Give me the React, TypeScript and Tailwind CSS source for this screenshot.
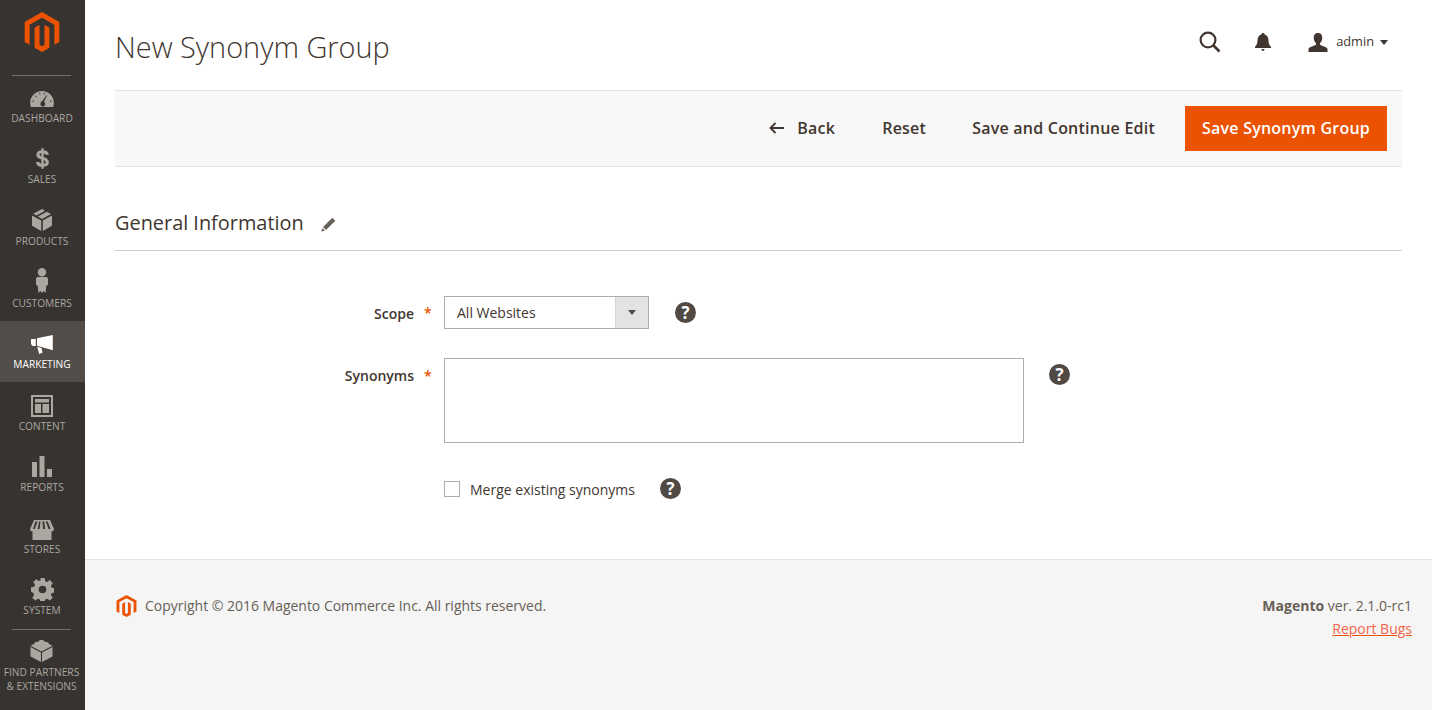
import { ReactNode } from "react";

const logoPath =
  "M12 24l-4.455-2.572v-12l2.97-1.715v12.001l1.485.902 1.485-.902V7.713l2.971 1.715v12L12 24zM22.391 6v12l-2.969 1.714V7.713L12 3.43 4.574 7.713v12.001L1.609 18V6L12 0l10.391 6z";

const DashboardIcon = () => (
  <svg className="mb-[2px]" width="24" height="16" viewBox="0 0 24 16" fill="currentColor">
    <path d="M12 0C5.500 0 .5 5 .2 11c-.1 2 .2 3.500.6 5h22.400c.4-1.500.7-3 .6-5C23.500 5 18.500 0 12 0z" />
    <g stroke="#373330" strokeWidth="1" fill="#373330">
      <path d="M4 10.500l-1.600-.6M6.500 6l-1.200-1.300M10 3.500l-.4-1.700M14 3.500l.4-1.700M20 10.500l1.600-.6" />
      <path d="M16.700 4.500l-3 6.500a2.200 2.200 0 1 1-3 1.500 2.200 2.200 0 0 1 1.700-2.200z" strokeWidth="0.500" />
    </g>
  </svg>
);

const DollarIcon = () => (
  <svg className="mb-[2px]" width="13" height="21" viewBox="0 0 14 22" fill="none" stroke="currentColor" strokeWidth="3.400">
    <path d="M12.300 7C12 4.800 10 3.700 7 3.700 4 3.700 2 5 2 7c0 2.200 2.200 3 5 3.800 2.900.8 5.200 1.700 5.200 4.200 0 2.200-2.200 3.300-5.200 3.300-3.100 0-5-1.200-5.500-3.500" />
    <path d="M7 0v22" strokeWidth="2.600" />
  </svg>
);

const BoxIcon = () => (
  <svg className="mb-[1px]" width="20" height="22" viewBox="0 0 20 22" fill="currentColor">
    <path d="M10 0l3 1.700-8.500 4.800L1.200 4.800zM14.800 2.700L19 5 10 10 5.800 7.600zM0 6.400l9.200 5.100V22L0 16.800zM20 6.400v10.400L10.800 22V11.500z" />
  </svg>
);

const PersonIcon = () => (
  <svg className="mb-[1px]" width="12" height="25" viewBox="0 0 12 25" fill="currentColor">
    <circle cx="6" cy="4.200" r="4.200" />
    <path d="M2 9h8c1.300 0 2 .8 2 2v6l-1.600.6-.9 7.400-2-2-1.500 2-1.500-2-2 2-.9-7.400L0 17v-6c0-1.200.7-2 2-2z" />
  </svg>
);

const MegaphoneIcon = () => (
  <svg className="mb-[1px]" width="22" height="19" viewBox="0 0 22 19" fill="currentColor">
    <path d="M6 3.200L21.800 0v15.200L6 10.800zM0 4h4.800v7H1.500L0 9zM6.200 11.800l4.300 1.200 1 4.800-3.300 1.200z" />
  </svg>
);

const ContentIcon = () => (
  <svg width="22" height="22" viewBox="0 0 22 22" fill="currentColor">
    <path fillRule="evenodd" d="M0 0h22v22H0zM2 2v18h18V2zM4 4h14v3.500H4zM4 9h6v9H4zM11.500 9H18v9h-6.500z" />
  </svg>
);

const ReportsIcon = () => (
  <svg className="mb-[1px]" width="20" height="21" viewBox="0 0 20 21" fill="currentColor">
    <path d="M0 6h5v15H0zM7.500 0h5v21h-5zM15 13h5v8h-5z" />
  </svg>
);

const StoreIcon = () => (
  <svg width="24" height="20" viewBox="0 0 24 20" fill="currentColor">
    <path fillRule="evenodd" d="M4 0h16l4 9c0 1.500-1 2.500-2.500 2.500V20h-19v-8.500C1 11.500 0 10.500 0 9zM5.500 1.500L3 9h1.600l3-7.500zM9.300 1.500L7.600 9h2l.9-7.500zM12.500 1.500l.6 7.500h2l-.9-7.500zM15.800 1.500l2.800 7.500h2l-3-7.500z" />
  </svg>
);

const GearIcon = () => (
  <svg width="23" height="23" viewBox="0 0 24 24" fill="currentColor">
    <path fillRule="evenodd" d="M9.800 0h4.400l.6 3.300 2 .8 2.800-1.900 3.100 3.100-1.900 2.800.8 2 3.400.6v4.400l-3.400.6-.8 2 1.900 2.800-3.100 3.100-2.800-1.900-2 .8-.6 3.400H9.800l-.6-3.400-2-.8-2.800 1.900-3.100-3.100 1.900-2.800-.8-2L0 14.100V9.700l3.400-.6.8-2-1.900-2.800 3.100-3.100 2.800 1.900 2-.8zM12 8a4 4 0 1 0 0 8 4 4 0 0 0 0-8z" />
  </svg>
);

const BrickIcon = () => (
  <svg width="23" height="22" viewBox="0 0 24 24" fill="currentColor">
    <path d="M12 0c1.500 0 2.700.5 3 1.300l1.600.9c1.200-.2 2.500.1 3 .9.200.3.200.6.200.9L24 6.200 12 12.500 0 6.200l4.200-2.200c0-.3 0-.6.200-.9.500-.8 1.800-1.100 3-.9l1.600-.9C9.300.5 10.500 0 12 0z" />
    <path d="M0 7.500l11.400 6V24L0 18zM24 7.500v10.500l-11.400 6V13.500z" />
  </svg>
);

const navItems: { label: string; icon: ReactNode; active?: boolean }[] = [
  { label: "DASHBOARD", icon: <DashboardIcon /> },
  { label: "SALES", icon: <DollarIcon /> },
  { label: "PRODUCTS", icon: <BoxIcon /> },
  { label: "CUSTOMERS", icon: <PersonIcon /> },
  { label: "MARKETING", icon: <MegaphoneIcon />, active: true },
  { label: "CONTENT", icon: <ContentIcon /> },
  { label: "REPORTS", icon: <ReportsIcon /> },
  { label: "STORES", icon: <StoreIcon /> },
  { label: "SYSTEM", icon: <GearIcon /> },
];

const Help = () => (
  <span className="flex h-[21px] w-[21px] items-center justify-center rounded-full bg-[#514943] text-[17px] font-bold leading-none text-white">
    ?
  </span>
);

const Star = () => <span className="block w-[30px] shrink-0 pl-[10px] text-[14px] font-semibold text-[#eb5202]">*</span>;

const Sidebar = () => (
  <aside className="flex w-[85px] shrink-0 flex-col bg-[#373330] text-[#aaa6a0]">
    <div className="-mb-px ml-[12px] mr-[14px] flex h-[76px] shrink-0 justify-center border-b border-[#736e69] pt-[12px]">
      <svg width="40" height="40" viewBox="0 0 24 24" fill="#eb5202" preserveAspectRatio="none">
        <path d={logoPath} />
      </svg>
    </div>
    {navItems.map((item) => (
      <div
        key={item.label}
        className={
          item.active
            ? "mb-[0.5px] flex h-[61px] shrink-0 flex-col items-center bg-[#524d49] pr-px text-white"
            : "flex h-[61.5px] shrink-0 flex-col items-center pr-px"
        }
      >
        <div className="flex h-[34px] shrink-0 items-end">{item.icon}</div>
        <span className={item.label === "SALES" ? "mt-[1.5px] text-[10.2px] leading-[14px]" : "mt-[2px] text-[10.2px] leading-[14px]"}>
          {item.label}
        </span>
      </div>
    ))}
    <div className="ml-[12px] mr-[14px] mt-[0.5px] flex flex-col items-center border-t border-[#736e69] pt-[10px]">
      <BrickIcon />
      <span className="mt-[3px] whitespace-nowrap text-center text-[10.2px] leading-[14px]">
        FIND PARTNERS
        <br />& EXTENSIONS
      </span>
    </div>
  </aside>
);

export default function App() {
  return (
    <div className="flex h-screen overflow-hidden bg-white font-['Open_Sans',sans-serif] text-[14px] text-[#41362f]">
      <Sidebar />
      <div className="flex min-w-0 flex-1 flex-col">
        <main className="flex h-[559px] shrink-0 flex-col px-[30px]">
          <header className="flex h-[90px] shrink-0 items-center justify-between">
            <h1 className="mt-[4px] text-[28.9px] font-light leading-[36px]">New Synonym Group</h1>
            <div className="mb-[6px] flex items-center text-[#41362f]">
              <svg width="22" height="22" viewBox="0 0 22 22" fill="none" stroke="currentColor" strokeWidth="2.200">
                <circle cx="9" cy="9" r="7.400" />
                <path d="M14.500 14.500l6 6" strokeWidth="2.600" />
              </svg>
              <svg className="ml-[34px]" width="16" height="18" viewBox="0 0 16 18" fill="currentColor">
                <path d="M8 0c1 0 1.600.6 1.700 1.500C12.300 2.300 13.500 4.500 13.500 7.500c0 2.800.7 4.700 2.500 6.200V15H0v-1.300C1.800 12.200 2.500 10.300 2.500 7.500c0-3 1.200-5.200 3.800-6C6.400.6 7 0 8 0zM6.500 16h3c0 1-.6 2-1.500 2s-1.500-1-1.500-2z" />
              </svg>
              <svg className="ml-[37px]" width="20" height="19" viewBox="0 0 20 20" fill="currentColor">
                <path d="M10 0c3 0 4.500 2 4.500 5 0 2.500-1 4.500-2.300 5.500v2c2.500 1 7.800 2.200 7.800 4.500v3H0v-3c0-2.300 5.300-3.500 7.800-4.500v-2C6.500 9.500 5.500 7.500 5.500 5c0-3 1.500-5 4.500-5z" />
              </svg>
              <span className="ml-[8px] text-[12.800px]">admin</span>
              <span className="ml-[6px] mr-[14px] h-0 w-0 border-x-[4px] border-t-[5px] border-x-transparent border-t-[#41362f]" />
            </div>
          </header>

          <div className="flex h-[77px] shrink-0 items-center justify-end gap-[47px] border-y border-[#e3e3e3] bg-[#f8f8f8] pb-[2px] pr-[15px] text-[16px] font-semibold tracking-[0.23px]">
            <span className="flex items-center">
              <svg width="15" height="12" viewBox="0 0 15 12" fill="none" stroke="#41362f" strokeWidth="1.800">
                <path d="M15 6H2M6.500 1L1.500 6l5 5" />
              </svg>
              <span className="ml-[13px]">Back</span>
            </span>
            <span>Reset</span>
            <div className="-ml-px flex items-center gap-[30px]">
              <span>Save and Continue Edit</span>
              <span className="-mb-[2px] flex h-[45px] w-[202px] items-center justify-center bg-[#eb5202] pb-[2px] text-white">
                Save Synonym Group
              </span>
            </div>
          </div>

          <div className="mt-[41px] flex h-[43px] shrink-0 items-start border-b border-[#cccccc]">
            <h2 className="text-[19.9px] font-normal leading-[30px]">General Information</h2>
            <svg className="ml-[17px] mt-[9px]" width="15" height="15" viewBox="0 0 15 15" fill="#676056">
              <path d="M11.300.7l3 3L5 13l-3-3zM1.300 11l2.700 2.700L.4 14.600z" />
            </svg>
          </div>

          <div className="mt-[45px] flex flex-col">
            <div className="flex items-center">
              <label className="w-[299px] pt-[2px] text-right font-semibold">Scope</label>
              <Star />
              <div className="flex h-[33px] w-[205px] items-stretch border border-[#adadad]">
                <span className="flex-1 pl-[12px] text-[14px] leading-[31px]">All Websites</span>
                <span className="flex w-[33px] items-center justify-center border-l border-[#d6d6d6] bg-[#e3e3e3]">
                  <span className="h-0 w-0 border-x-[4px] border-t-[5px] border-x-transparent border-t-[#514943]" />
                </span>
              </div>
              <span className="ml-[26px]"><Help /></span>
            </div>

            <div className="mt-[29px] flex items-start">
              <label className="w-[299px] pt-[7px] text-right font-semibold">Synonyms</label>
              <div className="pt-[7px]"><Star /></div>
              <textarea className="h-[85px] w-[580px] resize-none border border-[#adadad] bg-white" />
              <span className="ml-[25px] mt-[6px]"><Help /></span>
            </div>

            <div className="ml-[329px] mt-[36px] flex items-center">
              <span className="-mt-px h-[16px] w-[16px] border border-[#adadad] bg-white" />
              <span className="ml-[10px]">Merge existing synonyms</span>
              <span className="-mt-[2px] ml-[25px]"><Help /></span>
            </div>
          </div>
        </main>

        <footer className="flex flex-1 items-start justify-between border-t border-[#e3e3e3] bg-[#f5f5f5] pl-[30px] pr-[20px] pt-[34px]">
          <div className="mt-px flex items-center">
            <svg width="23" height="22" viewBox="0 0 24 24" fill="#eb5202" preserveAspectRatio="none">
              <path d={logoPath} />
            </svg>
            <span className="ml-[7px] text-[13.970px] text-[#676056]">Copyright © 2016 Magento Commerce Inc. All rights reserved.</span>
          </div>
          <div className="text-right leading-[23px] text-[#676056]">
            <div>
              <span className="font-bold">Magento</span> ver. 2.1.0-rc1
            </div>
            <div className="text-[#f0654a] underline decoration-[#eb5202]">Report Bugs</div>
          </div>
        </footer>
      </div>
    </div>
  );
}
